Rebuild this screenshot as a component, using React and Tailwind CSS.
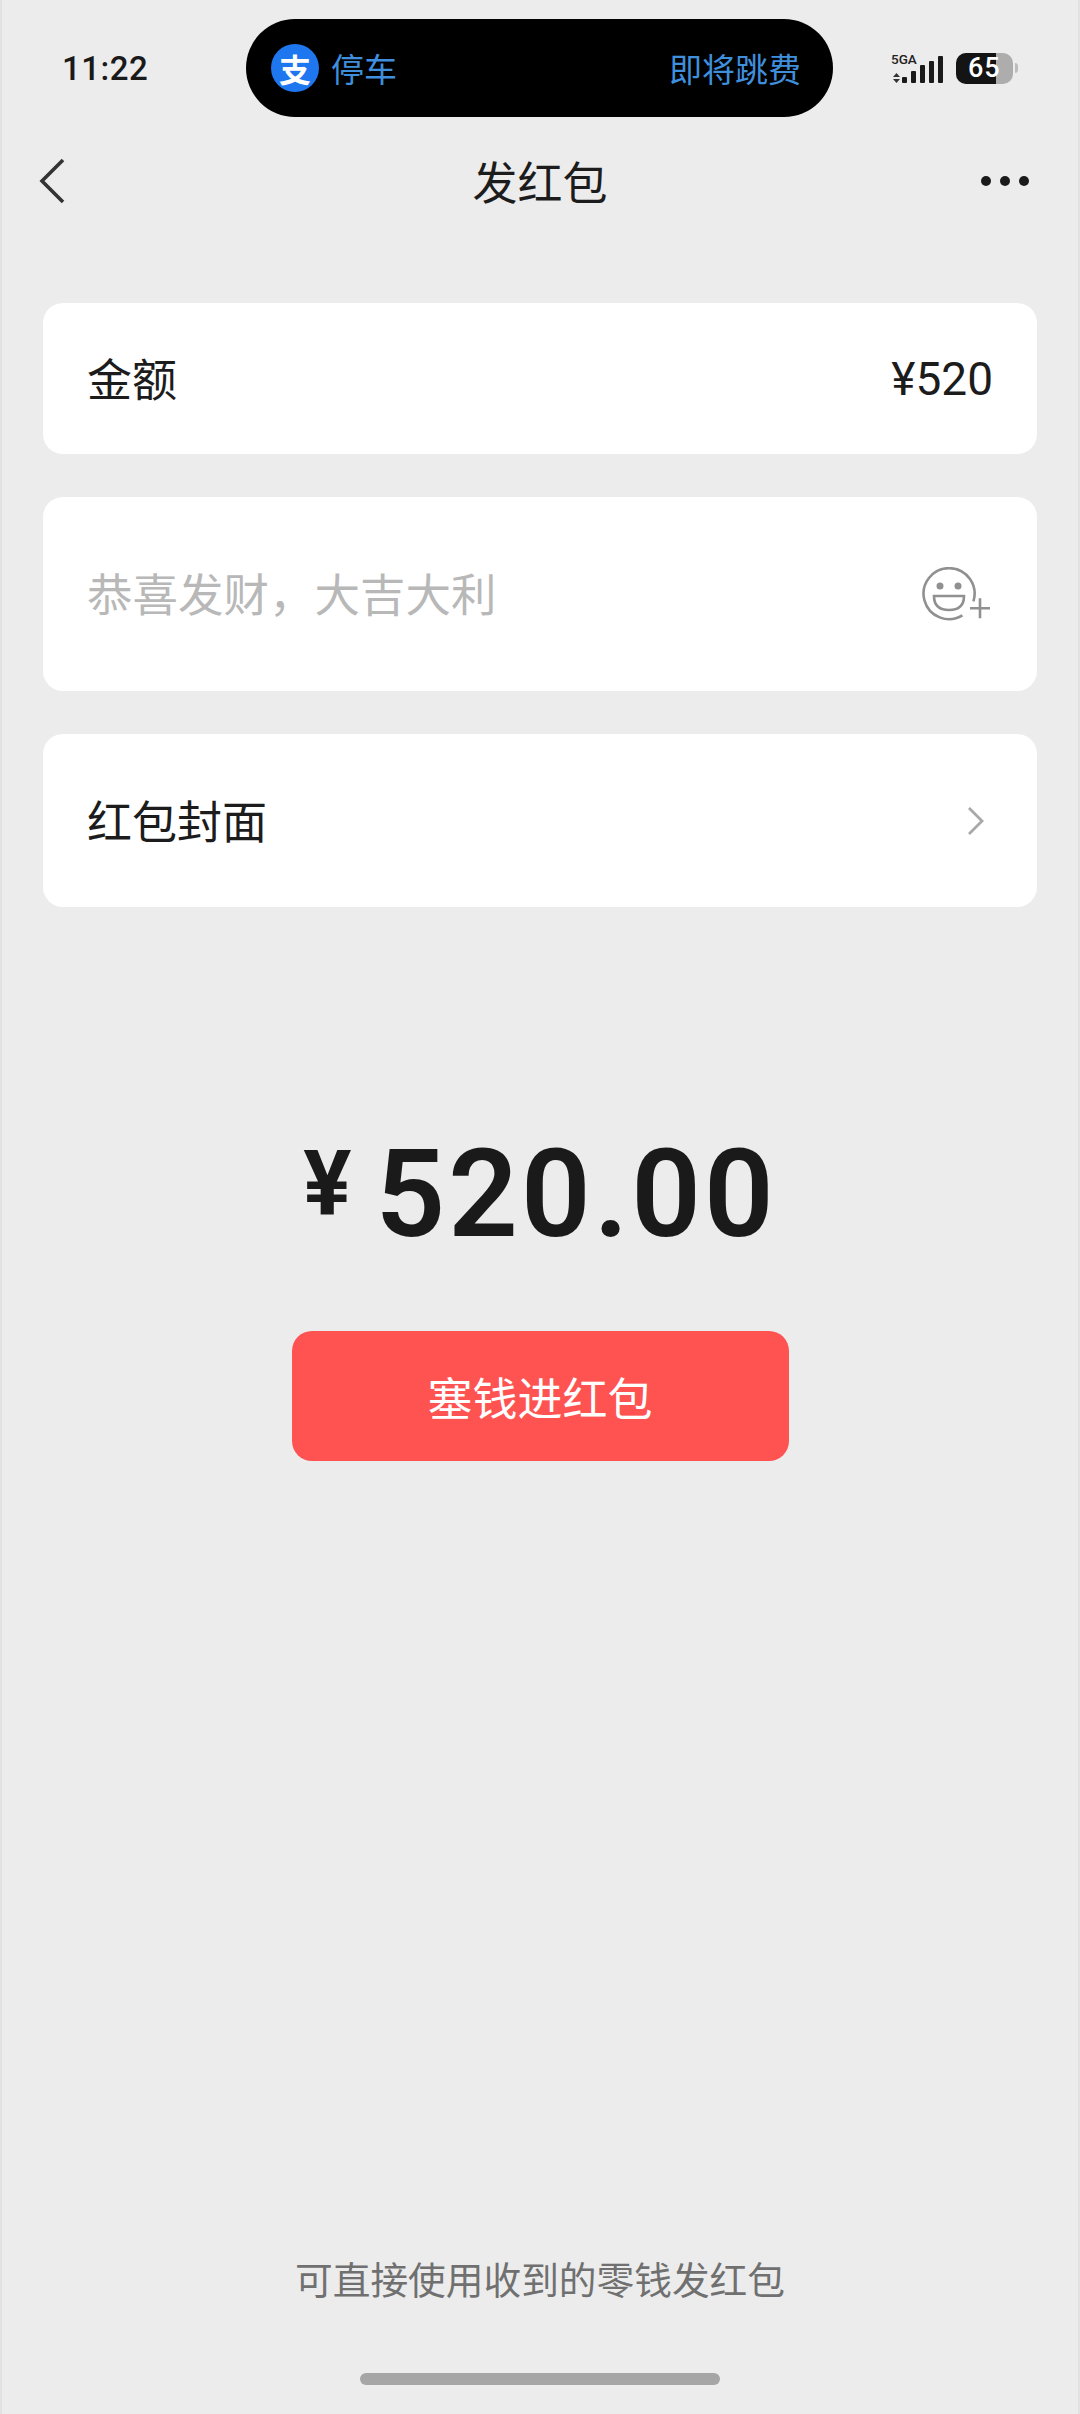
import React from 'react';

const cjk = "font-['Noto_Sans_CJK_SC',sans-serif]";

function StatusBar() {
  return (
    <div className="h-[136px] pt-[19px] flex items-start">
      <div className="w-[244px] h-[98px] flex items-center pl-[60px]">
        <span className="font-['Roboto',sans-serif] font-medium text-[33px] leading-none tracking-[0.5px] text-[#1a1a1a]">11:22</span>
      </div>
      <div className="w-[587px] h-[98px] rounded-[49px] bg-black flex items-center justify-between pl-[25px] pr-[32px]">
        <div className="flex items-center gap-[12px]">
          <div className="w-[48px] h-[48px] rounded-full bg-[#1f77f0] flex items-center justify-center">
            <span className={`${cjk} text-[32px] leading-none font-bold text-white`}>支</span>
          </div>
          <span className={`${cjk} text-[33px] leading-none text-[#3f8fdc]`}>停车</span>
        </div>
        <span className={`${cjk} text-[33px] leading-none text-[#3f8fdc]`}>即将跳费</span>
      </div>
      <div className="flex-1 h-[98px] flex items-center pl-[57px] gap-[12px]">
        <svg width="54" height="34" viewBox="0 0 54 34">
          <text x="1" y="12.500" fontSize="13.500" fontWeight="500" fontFamily="Roboto, sans-serif" fill="#222">5GA</text>
          <path d="M3 26 6.500 22 10 26ZM3 28 6.500 32 10 28Z" fill="#333" />
          <rect x="12" y="26" width="5" height="6" rx="1" fill="#1a1a1a" />
          <rect x="21" y="20" width="5" height="12" rx="1" fill="#1a1a1a" />
          <rect x="30" y="14" width="5" height="18" rx="1" fill="#1a1a1a" />
          <rect x="39" y="10" width="5" height="22" rx="1" fill="#1a1a1a" />
          <rect x="48" y="5" width="5" height="27" rx="1" fill="#1a1a1a" />
        </svg>
        <div className="relative w-[57px] h-[31px] rounded-[10px] bg-[#adadad] overflow-hidden flex items-center">
          <div className="absolute left-0 top-0 bottom-0 w-[40px] bg-[#141414]" />
          <span className="relative pl-[12px] font-['Roboto',sans-serif] font-medium text-[27px] leading-none tracking-[1px] text-white">65</span>
        </div>
        <div className="-ml-[10px] w-[3px] h-[10px] rounded-r-full bg-[#bdbdbd]" />
      </div>
    </div>
  );
}

function NavBar() {
  return (
    <div className="h-[91px] pb-[2px] px-[36px] grid grid-cols-[1fr_auto_1fr] items-center">
      <svg width="28" height="48" viewBox="0 0 28 48" fill="none">
        <path d="M25 3 4 24l21 21" stroke="#333" strokeWidth="3.6" />
      </svg>
      <span className={`${cjk} text-[45px] leading-none text-[#1c1c1c]`}>发红包</span>
      <div className="flex justify-end gap-[9px] pr-[13px]">
        <div className="w-[10px] h-[10px] rounded-full bg-[#1a1a1a]" />
        <div className="w-[10px] h-[10px] rounded-full bg-[#1a1a1a]" />
        <div className="w-[10px] h-[10px] rounded-full bg-[#1a1a1a]" />
      </div>
    </div>
  );
}

function EmojiPlus() {
  return (
    <svg width="70" height="56" viewBox="0 0 70 56" fill="none" stroke="#909090" strokeWidth="2.6" className="mt-[2px]">
      <path d="M40.400 48.400A25.500 25.500 0 1 1 51.400 34.300" />
      <circle cx="18" cy="19" r="3.500" fill="#909090" stroke="none" />
      <circle cx="36" cy="19" r="3.500" fill="#909090" stroke="none" />
      <path d="M12 29h30c0 10-6 14-15 14s-15-4-15-14Z" />
      <path d="M48 41.300h20M58 31.300v20" />
    </svg>
  );
}

export default function App() {
  return (
    <div className="w-[1080px] h-[2414px] bg-[#ececec] border-x-2 border-[#e2e2e2] flex flex-col overflow-hidden">
      <StatusBar />
      <NavBar />

      <div className="px-[41px] mt-[76px] flex flex-col gap-[43px]">
        <div className="h-[151px] rounded-[20px] bg-white flex items-center justify-between pl-[44px] pr-[44px]">
          <span className={`${cjk} text-[45px] leading-none text-[#1c1c1c] -mt-[2px]`}>金额</span>
          <span className="font-['Roboto',sans-serif] text-[46px] leading-none text-[#1c1c1c]">¥520</span>
        </div>
        <div className="h-[194px] rounded-[20px] bg-white flex items-center justify-between pl-[44px] pr-[45px]">
          <span className={`${cjk} text-[45.500px] leading-none text-[#b8b8b8] -mt-[3px]`}>恭喜发财，大吉大利</span>
          <EmojiPlus />
        </div>
        <div className="h-[173px] rounded-[20px] bg-white flex items-center justify-between pl-[44px] pr-[52px]">
          <span className={`${cjk} text-[45px] leading-none text-[#1c1c1c] -mt-[2px]`}>红包封面</span>
          <svg width="18" height="30" viewBox="0 0 18 30" fill="none">
            <path d="M2 2l13 13L2 28" stroke="#a8a8a8" strokeWidth="2.8" />
          </svg>
        </div>
      </div>

      <div className="mt-[233px] flex items-start justify-center gap-[24px] h-[130px] text-[#1a1a1a] font-['Roboto',sans-serif] font-semibold">
        <span className="text-[90px] leading-none font-bold">¥</span>
        <span className="text-[122px] leading-none tracking-[3px] -mt-[6px]">520.00</span>
      </div>

      <button className={`${cjk} self-center mt-[61px] w-[497px] h-[130px] rounded-[20px] bg-[#ff5352] text-white text-[45px] leading-none`}>
        塞钱进红包
      </button>

      <div className="flex-1" />

      <div className={`${cjk} text-center text-[37.700px] leading-none text-[#707070] mb-[76px]`}>
        可直接使用收到的零钱发红包
      </div>
      <div className="self-center w-[360px] h-[12px] rounded-full bg-[#a6a6a6] mb-[29px]" />
    </div>
  );
}
